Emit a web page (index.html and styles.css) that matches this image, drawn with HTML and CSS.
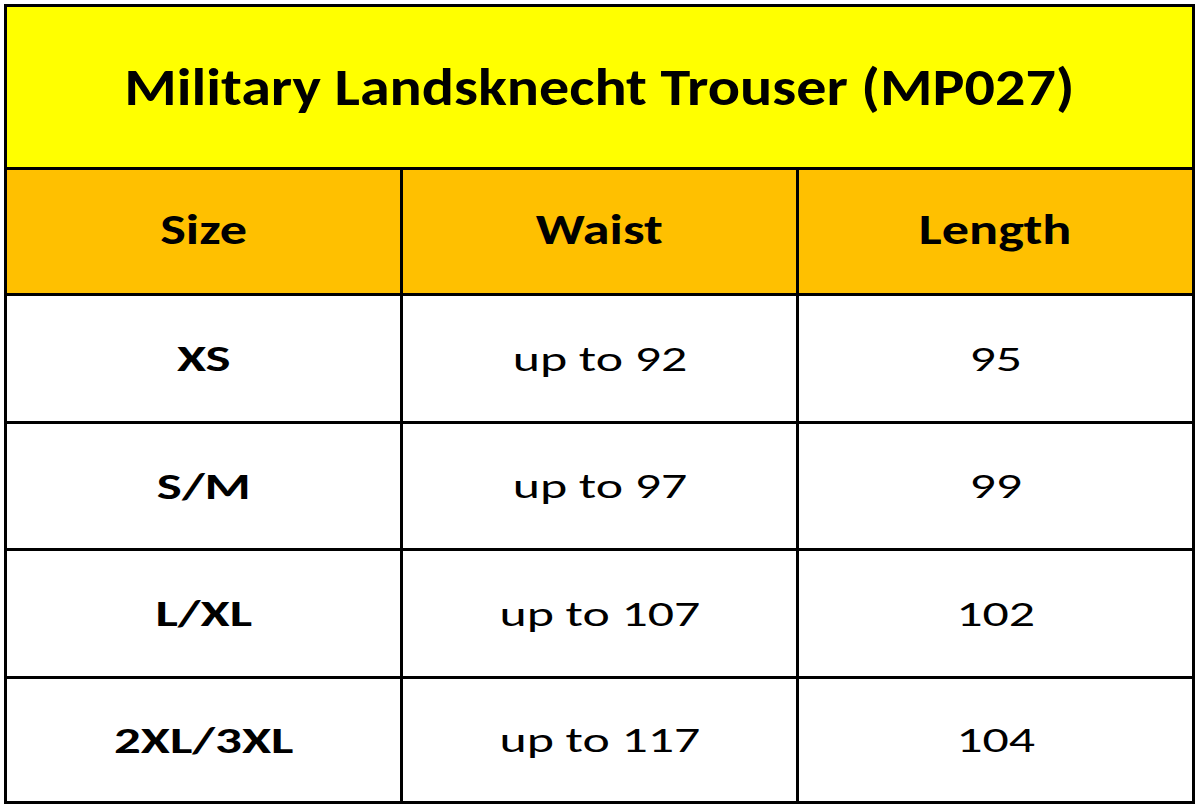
FILE: index.html
```html
<!DOCTYPE html>
<html>
<head>
<meta charset="utf-8">
<link rel="stylesheet" href="styles.css">
</head>
<body>
<div class="chart">
  <div class="cell title"><span class="txt">Military Landsknecht Trouser (MP027)</span></div>
  <div class="cell head"><span class="txt">Size</span></div>
  <div class="cell head"><span class="txt">Waist</span></div>
  <div class="cell head"><span class="txt">Length</span></div>
  <div class="cell size"><span class="txt">XS</span></div>
  <div class="cell val"><span class="txt">up to 92</span></div>
  <div class="cell val"><span class="txt">95</span></div>
  <div class="cell size"><span class="txt">S/M</span></div>
  <div class="cell val"><span class="txt">up to 97</span></div>
  <div class="cell val"><span class="txt">99</span></div>
  <div class="cell size"><span class="txt">L/XL</span></div>
  <div class="cell val"><span class="txt">up to 107</span></div>
  <div class="cell val"><span class="txt">102</span></div>
  <div class="cell size"><span class="txt">2XL/3XL</span></div>
  <div class="cell val"><span class="txt">up to 117</span></div>
  <div class="cell val"><span class="txt">104</span></div>
</div>
</body>
</html>
```

FILE: styles.css
```css
html, body {
  margin: 0;
  padding: 0;
  background: #ffffff;
}
body {
  padding: 4px 0 0 4px;
  font-family: "Carlito", "Calibri", "Lato", "Liberation Sans", sans-serif;
  color: #000;
}
.chart {
  width: 1185px;
  height: 794px;
  border: 3px solid #000;
  background: #000;
  display: grid;
  grid-template-columns: 393px 393px 393px;
  grid-template-rows: 160px 123px 125px 124px 125px 122px;
  gap: 3px;
}
.cell {
  display: flex;
  align-items: center;
  justify-content: center;
  background: #ffffff;
}
.txt {
  display: inline-block;
  white-space: nowrap;
  transform-origin: center center;
}
.title {
  grid-column: 1 / 4;
  background: #ffff00;
  font-weight: 700;
  font-size: 52px;
}
.title .txt {
  transform: scaleX(1.155);
}
.head {
  background: #ffc000;
  font-weight: 700;
  font-size: 42px;
}
.head .txt {
  transform: translateY(-2px) scaleX(1.29);
}
.size {
  font-weight: 700;
  font-size: 37px;
}
.size .txt {
  transform: scaleX(1.43);
}
.val {
  font-size: 35px;
}
.val .txt {
  transform: scaleX(1.48);
}
```
